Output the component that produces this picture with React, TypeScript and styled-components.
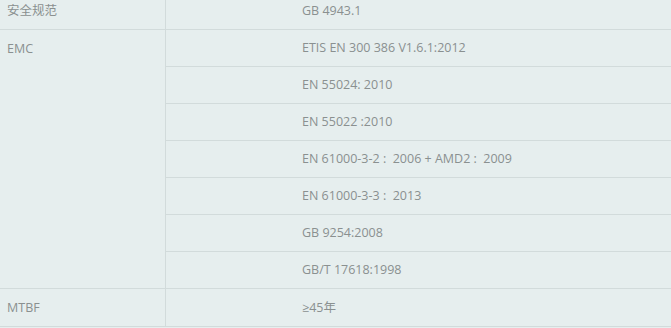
import styled, { createGlobalStyle } from 'styled-components'

const GlobalStyle = createGlobalStyle`
  html, body {
    margin: 0;
    padding: 0;
    background: #e6eeee;
    overflow: hidden;
  }
`

const specs = [
  { label: '安全规范', values: ['GB 4943.1'] },
  {
    label: 'EMC',
    values: [
      'ETIS EN 300 386 V1.6.1:2012',
      'EN 55024: 2010',
      'EN 55022 :2010',
      'EN 61000-3-2 :  2006 + AMD2 :  2009',
      'EN 61000-3-3 :  2013',
      'GB 9254:2008',
      'GB/T 17618:1998',
    ],
  },
  { label: 'MTBF', values: ['≥45年'] },
]

const App = () => {
  return (
    <>
      <GlobalStyle />
      <Wrap>
        <Table>
          <tbody>
            {specs.map((s) =>
              s.values.map((v, i) => (
                <Row key={s.label + i}>
                  {i === 0 && <Label rowSpan={s.values.length}>{s.label}</Label>}
                  <Value>{v}</Value>
                </Row>
              ))
            )}
          </tbody>
        </Table>
      </Wrap>
    </>
  )
}

export default App

const Wrap = styled.div`
  width: 671px;
  height: 328px;
  overflow: hidden;
  background: #e6eeee;
`
const Table = styled.table`
  width: 100%;
  margin-top: -8px;
  border-collapse: collapse;
  font-family: 'Open Sans', 'Noto Sans CJK SC', sans-serif;
  font-size: 12.5px;
  color: #8a9090;
`
const Row = styled.tr`
  height: 37px;
`
const Label = styled.td`
  width: 158px;
  padding: 0 0 0 7px;
  vertical-align: top;
  line-height: 37px;
  border-bottom: 1px solid #d2dbdb;
  border-right: 1px solid #d2dbdb;
`
const Value = styled.td`
  padding: 0 0 0 136px;
  height: 36px;
  line-height: 36px;
  white-space: pre;
  border-bottom: 1px solid #d2dbdb;
`
